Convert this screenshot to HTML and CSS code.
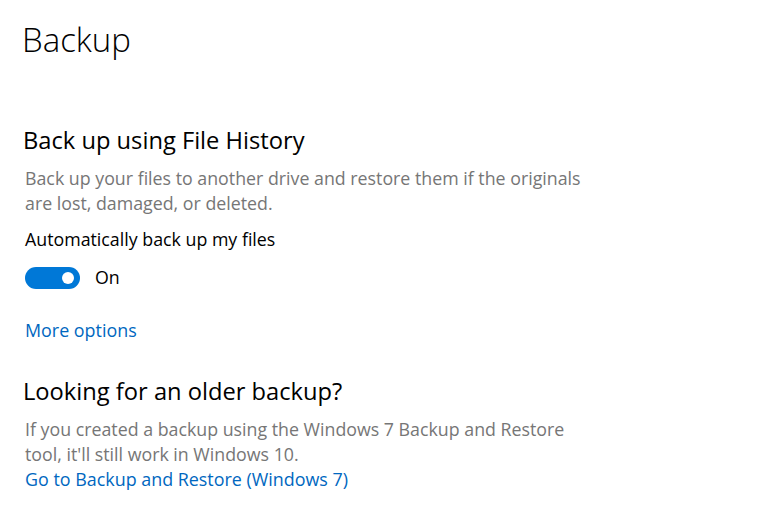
FILE: index.html
```html
<!DOCTYPE html>
<html lang="en">
<head>
<meta charset="utf-8">
<title>Backup</title>
<link rel="stylesheet" href="styles.css">
</head>
<body>
<main class="page">
  <h1 class="page-title">Backup</h1>

  <section class="section first">
    <h2 class="section-title">Back up using File History</h2>
    <p class="desc">Back up your files to another drive and restore them if the originals<br>are lost, damaged, or deleted.</p>
    <div class="setting-label">Automatically back up my files</div>
    <div class="toggle-row">
      <span class="toggle" role="switch" aria-checked="true"><span class="knob"></span></span>
      <span class="toggle-state">On</span>
    </div>
    <a class="link more" href="#">More options</a>
  </section>

  <section class="section second">
    <h2 class="section-title">Looking for an older backup?</h2>
    <p class="desc">If you created a backup using the Windows 7 Backup and Restore<br>tool, it'll still work in Windows 10.</p>
    <a class="link" href="#">Go to Backup and Restore (Windows 7)</a>
  </section>
</main>
</body>
</html>
```

FILE: styles.css
```css
html, body {
  margin: 0;
  padding: 0;
  background: #ffffff;
}
body {
  font-family: "Open Sans", "Noto Sans", sans-serif;
  color: #000000;
}
.page {
  display: flex;
  flex-direction: column;
  padding: 16px 0 0 25px;
}
.page-title {
  margin: 0 0 0 -3px;
  font-size: 33px;
  font-weight: 300;
  line-height: 48px;
}
.section {
  display: flex;
  flex-direction: column;
  align-items: flex-start;
}
.section.first {
  margin-top: 60px;
}
.section.second {
  margin-top: 32px;
}
.section-title {
  margin: 0 0 0 -2px;
  font-size: 23.7px;
  font-weight: 400;
  line-height: 32px;
}
.desc {
  margin: 10px 0 0 0;
  font-size: 17.8px;
  line-height: 25px;
  color: #767676;
}
.setting-label {
  margin-top: 11px;
  font-size: 17.8px;
  line-height: 25px;
}
.toggle-row {
  display: flex;
  align-items: center;
  gap: 15px;
  margin-top: 13px;
}
.toggle {
  position: relative;
  width: 55px;
  height: 22px;
  border-radius: 11px;
  background: #0078d7;
}
.knob {
  position: absolute;
  right: 6px;
  top: 5px;
  width: 12px;
  height: 12px;
  border-radius: 50%;
  background: #ffffff;
}
.toggle-state {
  font-size: 17.8px;
  line-height: 25px;
}
.link {
  font-size: 17.9px;
  line-height: 25px;
  color: #0067c0;
  text-decoration: none;
}
.link.more {
  margin-top: 28px;
}
```
